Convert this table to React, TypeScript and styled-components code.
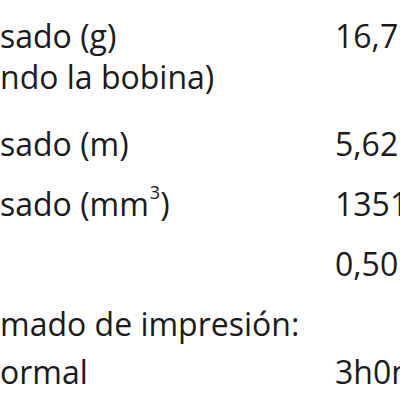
import React from "react";
import styled, { createGlobalStyle } from "styled-components";

const Global = createGlobalStyle`
  html, body {
    margin: 0;
    padding: 0;
    background: #ffffff;
    width: 400px;
    height: 400px;
    overflow: hidden;
  }
  #root {
    width: 400px;
    height: 400px;
    overflow: hidden;
  }
`;

const Panel = styled.div`
  width: 400px;
  height: 400px;
  overflow: hidden;
  background: #ffffff;
  padding-top: 15px;
  box-sizing: border-box;
  font-family: "Open Sans", "Noto Sans", sans-serif;
  font-size: 32px;
  line-height: 41px;
  color: #1a1a1a;
  display: flex;
  flex-direction: column;
`;

const Row = styled.div<{ $gap: number }>`
  display: grid;
  grid-template-columns: 335px 1fr;
  margin-top: ${(p) => p.$gap}px;
  white-space: nowrap;
`;

const Label = styled.div`
  overflow: hidden;
`;

const Value = styled.div`
  overflow: hidden;
`;

const Heading = styled.div<{ $gap: number }>`
  margin-top: ${(p) => p.$gap}px;
  white-space: nowrap;
`;

const Sup = styled.span`
  font-size: 18px;
  line-height: 0;
  vertical-align: 17px;
  margin-left: 1px;
`;

const rows = [
  { label: <>sado (g)<br />ndo la bobina)</>, value: "16,7", gap: 0 },
  { label: <>sado (m)</>, value: "5,62", gap: 26 },
  { label: <>sado (mm<Sup>3</Sup>)</>, value: "1351", gap: 19 },
  { label: <></>, value: "0,50", gap: 19 },
];

export default function App() {
  return (
    <>
      <Global />
      <Panel>
        {rows.map((r, i) => (
          <Row key={i} $gap={r.gap}>
            <Label>{r.label}</Label>
            <Value>{r.value}</Value>
          </Row>
        ))}
        <Heading $gap={19}>mado de impresión:</Heading>
        <Row $gap={7}>
          <Label>ormal</Label>
          <Value>3h0m</Value>
        </Row>
      </Panel>
    </>
  );
}
